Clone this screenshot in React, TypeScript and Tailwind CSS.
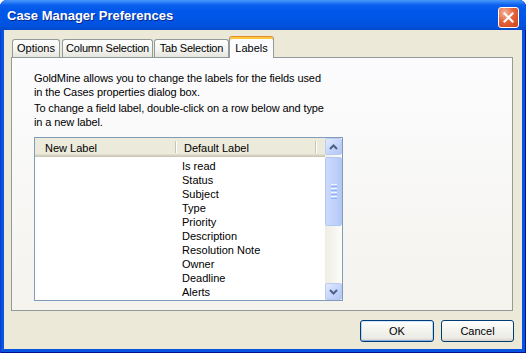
import React from "react";

const rows = [
  "Is read",
  "Status",
  "Subject",
  "Type",
  "Priority",
  "Description",
  "Resolution Note",
  "Owner",
  "Deadline",
  "Alerts",
];

function CloseButton() {
  return (
    <div className="self-start mt-[7px] w-[21px] h-[21px] rounded-[3px] border border-white bg-[radial-gradient(circle_at_30%_25%,#F6B39A_0%,#E6653E_45%,#CE3F17_100%)] flex items-center justify-center shrink-0">
      <svg width="11" height="11" viewBox="0 0 11 11">
        <path d="M1.5 1.5 L9.5 9.5 M9.5 1.5 L1.5 9.5" stroke="white" strokeWidth="2.2" strokeLinecap="square" />
      </svg>
    </div>
  );
}

function ScrollBtn({ up }: { up: boolean }) {
  return (
    <div className="h-[17px] w-[17px] shrink-0 rounded-[2px] border border-[#BBCAF0] bg-[linear-gradient(135deg,#E2EAFE_0%,#C6D6FB_50%,#B2C7F6_100%)] flex items-center justify-center">
      <svg width="9" height="6" viewBox="0 0 9 6">
        {up ? (
          <path d="M1 5 L4.5 1.5 L8 5" fill="none" stroke="#4D6185" strokeWidth="2" />
        ) : (
          <path d="M1 1 L4.5 4.5 L8 1" fill="none" stroke="#4D6185" strokeWidth="2" />
        )}
      </svg>
    </div>
  );
}

export default function App() {
  return (
    <div className="w-[529px] h-[357px] bg-white font-['Liberation_Sans',Arial,sans-serif] text-[11px] text-black">
      <div className="w-[526px] h-[353px] flex flex-col rounded-t-[7px] overflow-hidden bg-[#0853E0] shadow-[inset_1px_0_#0B3ED0,inset_-1px_0_#00138C,inset_0_-1px_#00138C]">
        {/* Title bar */}
        <div className="h-[30px] shrink-0 flex items-center pl-[7px] pr-[7px] bg-[linear-gradient(to_bottom,#4A97FB_0px,#2F84F7_2px,#0B5FEE_5px,#0058EA_10px,#0055E5_20px,#0052DE_26px,#0249C8_30px)]">
          <span className="flex-1 text-white font-bold text-[13px] leading-[16px] [text-shadow:1px_1px_#0A2A8C] pt-[2px]">
            Case Manager Preferences
          </span>
          <CloseButton />
        </div>

        {/* Body */}
        <div className="flex-1 mx-[4px] mb-[4px] bg-[#ECE9D8] flex flex-col pt-[6px] pl-[7px] pr-[9px]">
          {/* Tabs */}
          <div className="h-[21px] flex items-end shrink-0">
            <div className="ml-[1px] w-[48px] h-[18px] border border-b-0 border-[#919B9C] rounded-t-[3px] bg-[linear-gradient(to_bottom,#FFFFFF,#F3F3EF_60%,#E6E5DE)] flex items-center justify-center">
              Options
            </div>
            <div className="ml-[2px] w-[91px] h-[18px] border border-b-0 border-[#919B9C] rounded-t-[3px] bg-[linear-gradient(to_bottom,#FFFFFF,#F3F3EF_60%,#E6E5DE)] flex items-center justify-center tracking-[-0.2px]">
              Column Selection
            </div>
            <div className="ml-[1px] w-[75px] h-[18px] border border-b-0 border-[#919B9C] rounded-t-[3px] bg-[linear-gradient(to_bottom,#FFFFFF,#F3F3EF_60%,#E6E5DE)] flex items-center justify-center tracking-[-0.2px]">
              Tab Selection
            </div>
            <div className="relative z-10 w-[45px] h-[22px] -mb-[1px] border border-b-0 border-[#919B9C] border-t-[#E68B2C] rounded-t-[3px] bg-[#FCFCFE] shadow-[inset_0_2px_#FFC83C] flex items-center justify-center pt-[1px]">
              Labels
            </div>
          </div>

          {/* Panel */}
          <div className="h-[254px] shrink-0 border border-[#919B9C] bg-[linear-gradient(to_bottom,#FCFCFE,#F4F3EE)] pl-[22px] pt-[13px] tracking-[-0.1px]">
            <p className="leading-[14px]">
              GoldMine allows you to change the labels for the fields used
              <br />
              in the Cases properties dialog box.
            </p>
            <p className="leading-[14px] mt-[2px]">
              To change a field label, double-click on a row below and type
              <br />
              in a new label.
            </p>

            {/* List view */}
            <div className="mt-[8px] w-[309px] h-[164px] border border-[#7F9DB9] bg-white flex tracking-normal">
              <div className="flex-1 flex flex-col">
                <div className="h-[19px] shrink-0 bg-[#EBEADB] shadow-[inset_0_-1px_#CBC7B8,inset_0_-2px_#D6D2C2,inset_0_-3px_#E2DECD] flex items-center pt-[1px]">
                  <div className="w-[140px] pl-[10px]">New Label</div>
                  <div className="w-[1px] h-[12px] bg-[#C7C5B2] mb-[2px]" />
                  <div className="w-[1px] h-[12px] bg-white mb-[2px]" />
                  <div className="w-[138px] pl-[7px]">Default Label</div>
                  <div className="w-[1px] h-[12px] bg-[#C7C5B2] mb-[2px]" />
                  <div className="w-[1px] h-[12px] bg-white mb-[2px]" />
                </div>
                <div className="pt-[2px] flex flex-col">
                  {rows.map((r) => (
                    <div key={r} className="h-[14px] leading-[14px] pl-[147px]">
                      {r}
                    </div>
                  ))}
                </div>
              </div>

              {/* Scrollbar */}
              <div className="w-[17px] flex flex-col bg-[linear-gradient(to_right,#EEEDE5,#FCFCF9)]">
                <ScrollBtn up={true} />
                <div className="h-[2px] shrink-0" />
                <div className="h-[69px] shrink-0 rounded-[2px] border border-[#B3C7F4] bg-[linear-gradient(to_right,#CBDAFD,#BFD1FB_60%,#B4C8F6)] flex flex-col items-center justify-center gap-[1px]">
                  <div className="w-[6px] h-[1px] bg-[#EEF4FE]" />
                  <div className="w-[6px] h-[1px] bg-[#8CB0F8]" />
                  <div className="w-[6px] h-[1px] bg-[#EEF4FE]" />
                  <div className="w-[6px] h-[1px] bg-[#8CB0F8]" />
                  <div className="w-[6px] h-[1px] bg-[#EEF4FE]" />
                  <div className="w-[6px] h-[1px] bg-[#8CB0F8]" />
                  <div className="w-[6px] h-[1px] bg-[#EEF4FE]" />
                  <div className="w-[6px] h-[1px] bg-[#8CB0F8]" />
                </div>
                <div className="flex-1" />
                <ScrollBtn up={false} />
              </div>
            </div>
          </div>

          {/* Buttons */}
          <div className="mt-[9px] h-[22px] flex justify-end gap-[7px] mr-[-1px] shrink-0">
            <button className="w-[74px] h-[22px] rounded-[3px] border border-[#003C74] bg-[linear-gradient(to_bottom,#FFFFFF,#F4F4F0_40%,#ECEBE6_85%,#D6D0C5)] shadow-[inset_0_1px_#CEE7FF,inset_1px_0_#B7D2F7,inset_-1px_0_#B7D2F7,inset_0_-1px_#89ADE4] text-[11px] text-black">
              OK
            </button>
            <button className="w-[73px] h-[22px] rounded-[3px] border border-[#003C74] bg-[linear-gradient(to_bottom,#FFFFFF,#F4F4F0_40%,#ECEBE6_85%,#D6D0C5)] text-[11px] text-black">
              Cancel
            </button>
          </div>
        </div>
      </div>
    </div>
  );
}
